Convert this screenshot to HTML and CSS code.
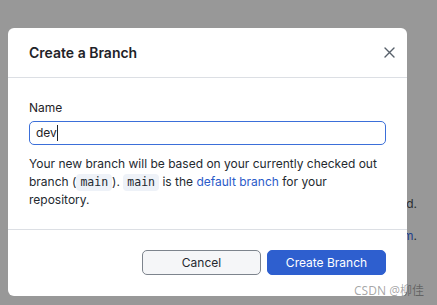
FILE: index.html
```html
<!DOCTYPE html>
<html lang="en">
  <head>
    <meta charset="UTF-8" />
    <title>Create a Branch</title>
    <link rel="stylesheet" href="styles.css">
  </head>
  <body>
    <div class="backdrop">
      <p class="behind behind-one">was created.</p>
      <p class="behind behind-two"><span class="blue">Learn more about branches in Git on docs.github.com</span>.</p>
    </div>
    <div class="dialog">
      <header class="dialog-header">
        <h1>Create a Branch</h1>
        <span class="close" aria-label="Close">
          <svg width="11" height="11" viewBox="0 0 11 11">
            <path d="M1 1 L10 10 M10 1 L1 10" stroke="#57606a" stroke-width="1.4" stroke-linecap="round" />
          </svg>
        </span>
      </header>
      <div class="dialog-body">
        <label class="label">Name</label>
        <div class="field">dev<span class="caret"></span></div>
        <p class="info">
          Your new branch will be based on your currently checked out
          branch (<span class="code">main</span>). <span class="code">main</span>
          is the <a href="#">default branch</a> for your repository.
        </p>
      </div>
      <footer class="dialog-footer">
        <button class="btn">Cancel</button>
        <button class="btn btn-primary">Create Branch</button>
      </footer>
    </div>
    <span class="watermark">CSDN @柳佳</span>
  </body>
</html>
```

FILE: styles.css
```css
body {
  margin: 0;
  background-color: #989898;
  font-family: Inter, "Noto Sans", sans-serif;
  color: #1f2328;
  padding: 28px 0 0 8px;
  height: 305px;
  box-sizing: border-box;
  overflow: hidden;
  position: relative;
}
.backdrop {
  position: absolute;
  top: 0;
  right: 20px;
  width: 600px;
  text-align: right;
  font-size: 12px;
  color: #2a2d31;
}
.behind {
  margin: 0;
  white-space: nowrap;
}
.behind-one {
  margin-top: 196px;
}
.behind-two {
  margin-top: 17px;
}
.blue {
  color: #1f3f8c;
}
.dialog {
  position: relative;
  width: 399px;
  height: 268px;
  background: #fff;
  border-radius: 6px;
  display: flex;
  flex-direction: column;
}
.dialog-header {
  height: 50px;
  box-sizing: border-box;
  border-bottom: 1px solid #dcdfe4;
  display: flex;
  align-items: center;
  justify-content: space-between;
  padding: 0 12px 0 21px;
}
h1 {
  margin: 0;
  font-size: 14px;
  font-weight: 600;
}
.close {
  display: flex;
  margin-top: -1px;
}
.dialog-body {
  padding: 21px 21px 20px;
  border-bottom: 1px solid #dcdfe4;
}
.label {
  display: block;
  font-size: 12px;
  line-height: 18px;
  margin-bottom: 4px;
}
.field {
  height: 24px;
  box-sizing: border-box;
  border: 1.5px solid #3b6fd9;
  border-radius: 5px;
  font-size: 12px;
  line-height: 20px;
  padding: 0 6px;
  display: flex;
  align-items: center;
}
.caret {
  display: inline-block;
  width: 1px;
  height: 16px;
  background: #1f2328;
}
.info {
  margin: 10px 0 0;
  font-size: 12px;
  line-height: 18px;
  color: #24292f;
}
.code {
  display: inline-block;
  font-family: "DejaVu Sans Mono", monospace;
  font-size: 11.5px;
  line-height: 17px;
  background: #eef2f8;
  border-radius: 4px;
  padding: 0 4px;
}
a {
  color: #2a5bc9;
  text-decoration: none;
}
.dialog-footer {
  display: flex;
  justify-content: flex-end;
  gap: 6px;
  padding: 20px 21px 0;
}
.btn {
  width: 119px;
  height: 25px;
  border: 1px solid #7d848d;
  border-radius: 5px;
  background: #f5f6f8;
  font-family: Inter, "Noto Sans", sans-serif;
  font-size: 12px;
  color: #24292f;
}
.btn-primary {
  background: #2e5fcf;
  border-color: #2e5fcf;
  color: #fff;
}
.watermark {
  position: absolute;
  left: 354px;
  top: 281px;
  font-size: 12px;
  color: rgba(0, 0, 0, 0.36);
  font-family: "Noto Sans", "Noto Sans CJK SC", sans-serif;
}
```
